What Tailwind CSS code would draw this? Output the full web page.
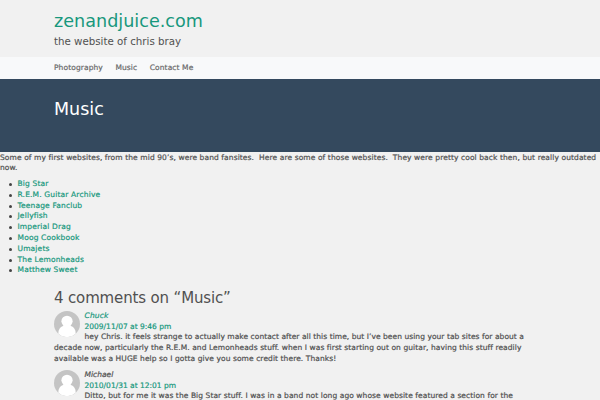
<!DOCTYPE html>
<html lang="en">
  <head>
    <meta charset="UTF-8" />
    <meta name="viewport" content="width=device-width, initial-scale=1.0" />
    <script src="https://cdn.jsdelivr.net/npm/@tailwindcss/browser@4"></script>
    <title>Music | zenandjuice.com</title>
  </head>
  <body class="h-screen overflow-hidden bg-[#f1f1f1] font-['DejaVu_Sans',sans-serif] text-[7.5px] leading-[10.8px] text-[#505050]">
    <header class="h-[57px] px-[54px] pt-[9px]">
      <h1 class="text-[17.6px] leading-[24px] text-[#18987d]"><a href="#">zenandjuice.com</a></h1>
      <p class="text-[10.25px] leading-[16px]">the website of chris bray</p>
    </header>
    <nav class="flex h-[22px] items-center gap-[12.5px] bg-[#f8f9fa] px-[54px] tracking-[0.1px] text-[#6a6a6a] [-webkit-text-stroke:0.2px]">
      <a href="#">Photography</a>
      <a href="#">Music</a>
      <a href="#">Contact Me</a>
    </nav>
    <div class="h-[73px] bg-[#34495e] px-[54px] pt-[18px]">
      <h2 class="text-[17.5px] leading-[24px] text-white">Music</h2>
    </div>
    <main class="pt-[0.5px] [-webkit-text-stroke:0.2px]">
      <p class="whitespace-nowrap tracking-[0.1px]">
        Some of my first websites, from the mid 90’s, were band fansites.&nbsp; Here are some of those websites.&nbsp; They were pretty cool back then, but really outdated<br />
        now.
      </p>
      <ul class="mt-[5px] pl-[9px] tracking-[0.16px] text-[#18987d] *:flex *:items-center *:gap-[5.5px] *:before:size-[3px] *:before:rounded-full *:before:bg-[#444] *:before:content-['']">
        <li><a href="#">Big Star</a></li>
        <li><a href="#">R.E.M. Guitar Archive</a></li>
        <li><a href="#">Teenage Fanclub</a></li>
        <li><a href="#">Jellyfish</a></li>
        <li><a href="#">Imperial Drag</a></li>
        <li><a href="#">Moog Cookbook</a></li>
        <li><a href="#">Umajets</a></li>
        <li><a href="#">The Lemonheads</a></li>
        <li><a href="#">Matthew Sweet</a></li>
      </ul>
    </main>
    <section class="px-[54px] pt-[9.5px]">
      <h2 class="mb-px text-[15px] leading-[24px] tracking-[-0.15px]">4 comments on “Music”</h2>
      <article class="h-[59px] whitespace-nowrap [-webkit-text-stroke:0.2px]">
        <svg class="float-left mr-[4.5px] size-[26px]" viewBox="0 0 26 26">
          <circle cx="13" cy="13" r="13" fill="#c4c4c4" />
          <circle cx="13" cy="10.3" r="5.6" fill="#fff" />
          <path d="M4.3 22.7C4.3 18.5 6 16 9 15h8c3 1 4.7 3.5 4.7 7.7A13 13 0 0 1 4.3 22.7Z" fill="#fff" />
        </svg>
        <cite class="block tracking-[0.15px] text-[#18987d]">Chuck</cite>
        <a href="#" class="block text-[#18987d]">2009/11/07 at 9:46 pm</a>
        <p class="tracking-[0.055px]">
          hey Chris. it feels strange to actually make contact after all this time, but I’ve been using your tab sites for about a<br />
          <span class="tracking-[0.075px]">decade now, particularly the R.E.M. and Lemonheads stuff. when I was first starting out on guitar, having this stuff readily</span><br />
          <span class="tracking-[0.085px]">available was a HUGE help so I gotta give you some credit there. Thanks!</span>
        </p>
      </article>
      <article class="whitespace-nowrap [-webkit-text-stroke:0.2px]">
        <svg class="float-left mr-[4.5px] size-[26px]" viewBox="0 0 26 26">
          <circle cx="13" cy="13" r="13" fill="#c4c4c4" />
          <circle cx="13" cy="10.3" r="5.6" fill="#fff" />
          <path d="M4.3 22.7C4.3 18.5 6 16 9 15h8c3 1 4.7 3.5 4.7 7.7A13 13 0 0 1 4.3 22.7Z" fill="#fff" />
        </svg>
        <cite class="block">Michael</cite>
        <a href="#" class="block text-[#18987d]">2010/01/31 at 12:01 pm</a>
        <p class="tracking-[0.08px]">Ditto, but for me it was the Big Star stuff. I was in a band not long ago whose website featured a section for the</p>
      </article>
    </section>
  </body>
</html>
